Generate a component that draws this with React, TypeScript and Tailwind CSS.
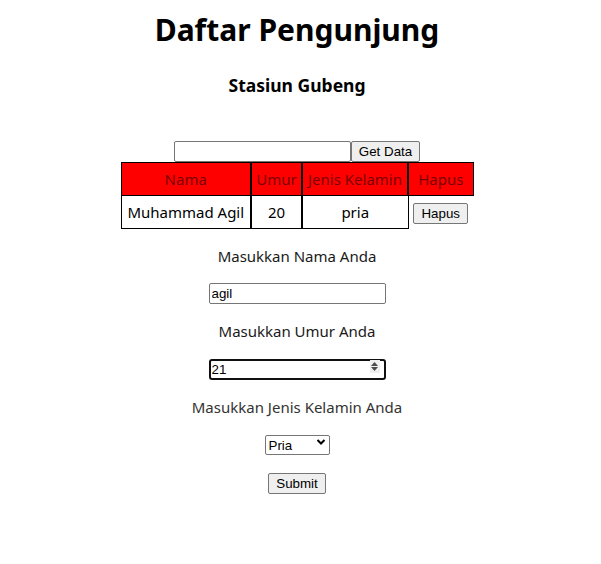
import React from "react";

const rows = [{ nama: "Muhammad Agil", umur: "20", jk: "pria" }];

const App = () => {
  return (
    <div className="flex flex-col items-center pr-[7px] text-black font-['Noto_Sans',sans-serif] bg-white min-h-[564px]">
      <h1 className="mt-[11px] text-[30px] font-bold leading-[38px]">Daftar Pengunjung</h1>
      <h3 className="mt-[24px] text-[17.5px] font-bold leading-[24px]">Stasiun Gubeng</h3>

      <div className="mt-[44px] flex items-stretch font-['Liberation_Sans',Arial,sans-serif] text-[13.33px]">
        <input
          type="text"
          className="w-[177px] h-[21px] border border-[#767676] rounded-[2px] px-[2px] outline-none"
        />
        <button className="h-[21px] px-[7px] bg-[#efefef] border border-[#767676] rounded-[2px] leading-none">
          Get Data
        </button>
      </div>

      <table className="border-collapse text-[15px]">
        <thead>
          <tr className="h-[33px] bg-[#ff0000] text-[#7a0000]">
            <th className="w-[130px] font-normal border border-black">Nama</th>
            <th className="w-[51px] font-normal border-2 border-black border-y">Umur</th>
            <th className="w-[106px] font-normal border border-black">Jenis Kelamin</th>
            <th className="w-[65px] font-normal border border-black border-l-2">Hapus</th>
          </tr>
        </thead>
        <tbody>
          {rows.map((r) => (
            <tr key={r.nama} className="h-[33px] text-center">
              <td className="border border-black">{r.nama}</td>
              <td className="border-2 border-black border-y">{r.umur}</td>
              <td className="border border-black">{r.jk}</td>
              <td>
                <button className="h-[21px] px-[7px] bg-[#efefef] border border-[#767676] rounded-[2px] leading-none font-['Liberation_Sans',Arial,sans-serif] text-[13.33px]">
                  Hapus
                </button>
              </td>
            </tr>
          ))}
        </tbody>
      </table>

      <p className="mt-[16px] text-[15px] leading-[22px] text-[#1a1a1a]">Masukkan Nama Anda</p>
      <input
        type="text"
        defaultValue="agil"
        className="mt-[16px] w-[177px] h-[21px] border border-[#767676] rounded-[2px] px-[2px] outline-none font-['Liberation_Sans',Arial,sans-serif] text-[13.33px]"
      />

      <p className="mt-[16px] text-[15px] leading-[22px] text-[#1a1a1a]">Masukkan Umur Anda</p>
      <div className="mt-[14px] relative w-[177px] h-[21px]">
        <input
          type="text"
          defaultValue="21"
          className="w-full h-full border-2 border-[#101010] rounded-[3px] px-[1px] outline-none font-['Liberation_Sans',Arial,sans-serif] text-[13.33px]"
        />
        <div className="absolute right-[6px] top-[4px] w-[10px] h-[13px] bg-[#efefef] flex flex-col items-center justify-center gap-[1px]">
          <svg width="7" height="4" viewBox="0 0 7 4"><path d="M0 4 L3.5 0 L7 4 Z" fill="#4a4a4a" /></svg>
          <svg width="7" height="4" viewBox="0 0 7 4"><path d="M0 0 L3.5 4 L7 0 Z" fill="#4a4a4a" /></svg>
        </div>
      </div>

      <p className="mt-[19px] text-[15px] leading-[22px] text-[#333]">Masukkan Jenis Kelamin Anda</p>
      <div className="mt-[14px] relative w-[65px] h-[20px]">
        <select className="appearance-none w-full h-full border border-[#767676] rounded-[2px] pl-[3px] bg-white outline-none font-['Liberation_Sans',Arial,sans-serif] text-[13.33px]">
          <option>Pria</option>
          <option>Wanita</option>
        </select>
        <svg className="absolute right-[4px] top-[6px] pointer-events-none" width="10" height="8" viewBox="0 0 10 8">
          <path d="M1.5 2 L5 5.5 L8.5 2" stroke="#000" strokeWidth="2" fill="none" />
        </svg>
      </div>

      <button className="mt-[21px] h-[21px] px-[7px] bg-[#efefef] border border-[#767676] rounded-[2px] leading-none font-['Liberation_Sans',Arial,sans-serif] text-[13.33px]">
        Submit
      </button>
    </div>
  );
};

export default App;
